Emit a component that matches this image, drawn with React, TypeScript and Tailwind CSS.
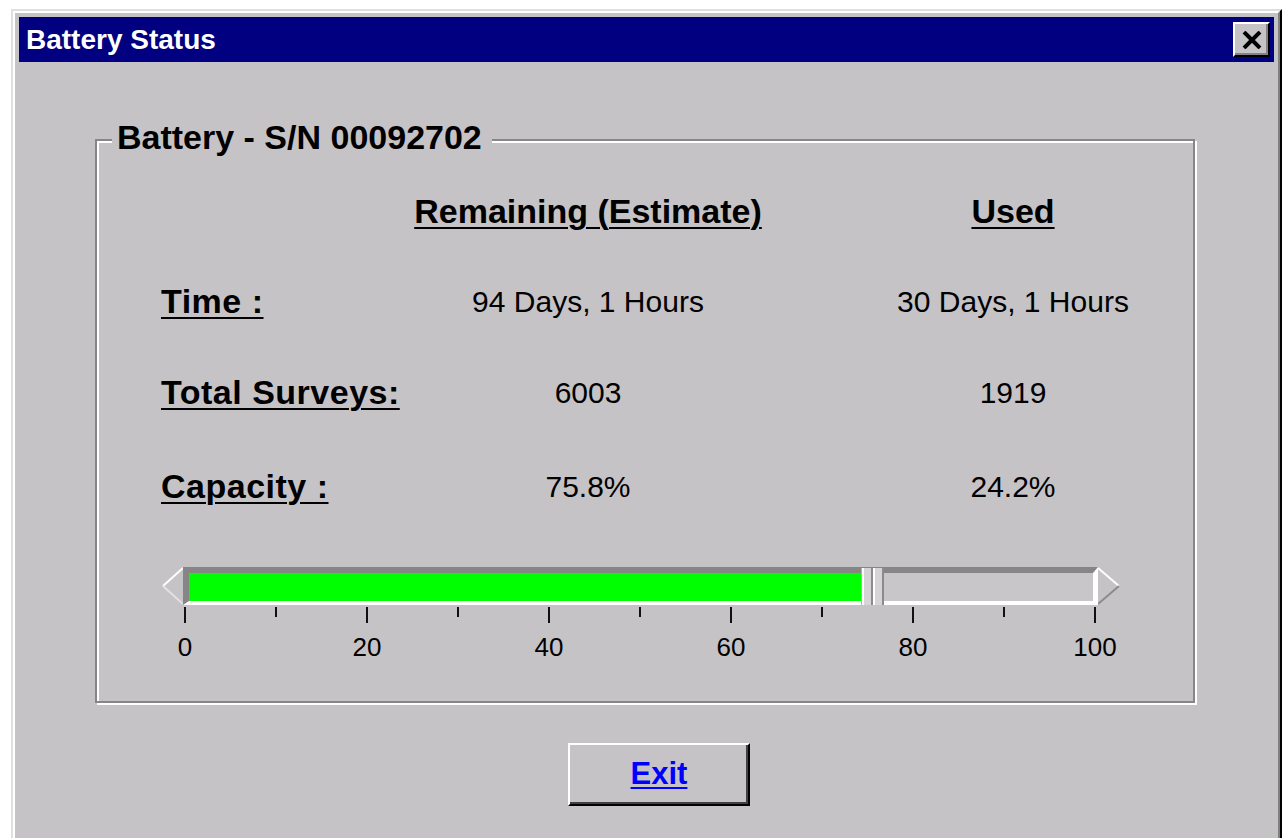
import React from 'react';

interface StatRow {
  label: string;
  remaining: string;
  used: string;
  spacing: string;
}

const rows: StatRow[] = [
  { label: 'Time :', remaining: '94 Days, 1 Hours', used: '30 Days, 1 Hours', spacing: 'mt-[50px]' },
  { label: 'Total Surveys:', remaining: '6003', used: '1919', spacing: 'mt-[51px]' },
  { label: 'Capacity :', remaining: '75.8%', used: '24.2%', spacing: 'mt-[54px]' },
];

const capacity = 75.8;
const ticks = Array.from({ length: 11 }, (_, i) => i);
const scaleLabels = [0, 20, 40, 60, 80, 100];

function CloseButton() {
  return (
    <div className="flex h-[35px] w-[37px] items-center justify-center border-2 border-t-white border-l-white border-r-black border-b-black bg-[#c6c3c6] shadow-[inset_-2px_-2px_0_#848284]">
      <svg width="20" height="18" viewBox="0 0 20 18">
        <path d="M2 1 L18 17 M18 1 L2 17" stroke="#000" strokeWidth="4" />
      </svg>
    </div>
  );
}

function CapacitySlider({ value }: { value: number }) {
  // green fill ends where the thumb begins; scale runs 910px from 0 to 100
  const fillWidth = Math.round((910 * value) / 100 - 18);

  return (
    <div className="ml-[65px] mt-[61px] w-[960px]">
      <div className="flex h-[38px] items-stretch">
        <svg width="21" height="38" viewBox="0 0 21 38">
          <polygon points="21,1 1,19 21,37" fill="#c6c3c6" />
          <path d="M21 1 L1 19" stroke="#fff" strokeWidth="2" />
          <path d="M1 19 L21 37" stroke="#e2e2e2" strokeWidth="2" />
        </svg>
        <div className="flex h-[38px] w-[915px] items-start border-t-[6px] border-l-[6px] border-b-[4px] border-r-[5px] border-t-[#878687] border-l-[#878687] border-b-white border-r-white">
          <div className="h-[28px] bg-[#00ff00]" style={{ width: fillWidth }} />
          <div className="-mt-[5px] flex h-[37px] w-[23px] border-l border-[#b0b0b0] bg-[#d6d4d6]">
            <div className="h-full w-[11px] border-l-2 border-r-2 border-l-white border-r-[#8c8a8c]" />
            <div className="h-full w-[11px] border-l-2 border-r-2 border-l-white border-r-[#8c8a8c]" />
          </div>
          <div className="h-[28px] flex-1 bg-[#c8c6c8]" />
        </div>
        <svg width="22" height="38" viewBox="0 0 22 38">
          <polygon points="0,1 21,19 0,37" fill="#c6c3c6" />
          <path d="M0 1 L21 19" stroke="#fff" strokeWidth="2" />
          <path d="M21 19 L0 37" stroke="#8c8a8c" strokeWidth="2" />
        </svg>
      </div>

      {/* tick marks, major every 20 */}
      <div className="ml-[22px] mt-[2px] flex w-[912px] items-start justify-between">
        {ticks.map((t) => (
          <div key={t} className={t % 2 === 0 ? 'h-[16px] w-[2px] bg-[#101010]' : 'h-[10px] w-[2px] bg-[#101010]'} />
        ))}
      </div>

      <div className="ml-[23px] mt-[9px] flex w-[910px] justify-between">
        {scaleLabels.map((l) => (
          <div key={l} className="flex w-0 justify-center">
            <span className="text-[26px] leading-[30px] text-black">{l}</span>
          </div>
        ))}
      </div>
    </div>
  );
}

export default function App() {
  return (
    <div className="h-[838px] overflow-hidden bg-white pl-[11px] pt-[9px] font-['Liberation_Sans',Arial,sans-serif]">
      <div className="h-[900px] w-[1271px] border-2 border-t-[#dfdfdf] border-l-[#dfdfdf] border-r-black border-b-black">
        <div className="h-full border-2 border-t-white border-l-white border-r-[#808080] border-b-[#808080] bg-[#c6c3c6] px-[4px] pt-[4px]">
          {/* Title bar */}
          <div className="flex h-[45px] items-center justify-between bg-[#000080] pl-[7px] pr-[4px]">
            <span className="text-[28px] font-bold leading-none text-white">Battery Status</span>
            <CloseButton />
          </div>

          {/* Battery group box */}
          <div className="relative ml-[76px] mt-[77px] h-[564px] w-[1100px] border-2 border-[#878687] shadow-[inset_2px_2px_0_#fff,2px_2px_0_#fff]">
            <div className="absolute left-[15px] top-[-21px] bg-[#c6c3c6] pl-[5px] pr-[10px] text-[34px] font-bold leading-[34px] text-black">
              Battery - S/N 00092702
            </div>

            <div className="pl-[64px] pt-[50px]">
              <div className="flex h-[40px] items-center text-[34px] font-bold text-black">
                <div className="w-[239px]" />
                <div className="w-[376px] text-center">
                  <span className="underline decoration-2 underline-offset-[4px]">Remaining (Estimate)</span>
                </div>
                <div className="ml-[87px] w-[300px] text-center">
                  <span className="underline decoration-2 underline-offset-[4px]">Used</span>
                </div>
              </div>

              {rows.map((row) => (
                <div key={row.label} className={`flex h-[40px] items-center ${row.spacing}`}>
                  <div className="w-[239px] text-[34px] font-bold tracking-[0.5px] text-black">
                    <span className="underline decoration-2 underline-offset-[4px]">{row.label}</span>
                  </div>
                  <div className="w-[376px] text-center text-[30px] text-black">{row.remaining}</div>
                  <div className="ml-[87px] w-[300px] text-center text-[30px] text-black">{row.used}</div>
                </div>
              ))}
            </div>

            <CapacitySlider value={capacity} />
          </div>

          {/* Exit button */}
          <button className="ml-[549px] mt-[40px] flex h-[63px] w-[182px] items-center justify-center border-2 border-t-white border-l-white border-r-black border-b-black bg-[#c6c3c6] shadow-[inset_-2px_-2px_0_#424142]">
            <span className="text-[31px] font-bold text-[#0000ff] underline decoration-2 underline-offset-[3px]">Exit</span>
          </button>
        </div>
      </div>
    </div>
  );
}
